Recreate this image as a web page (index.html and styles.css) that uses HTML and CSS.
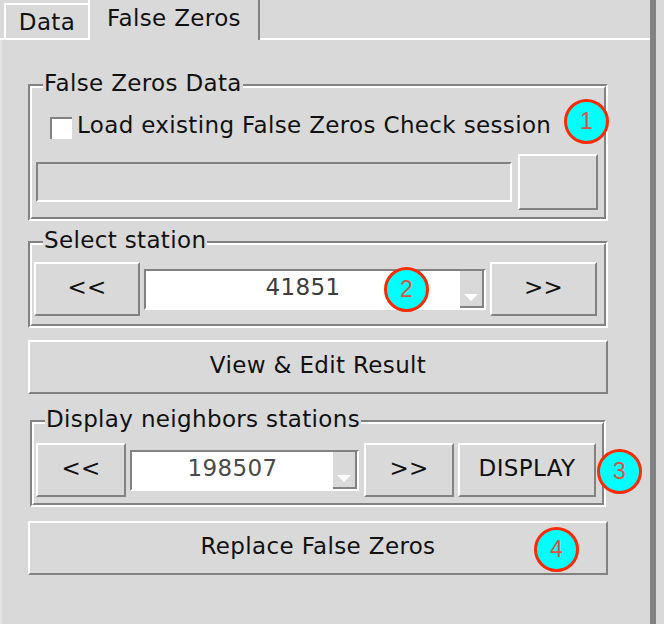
FILE: index.html
```html
<!DOCTYPE html>
<html>
<head>
<meta charset="utf-8">
<link rel="stylesheet" href="styles.css">
</head>
<body>
<div class="window">
  <div class="notebook">
    <div class="tabbar">
      <div class="tab-lead"></div>
      <div class="tab">Data</div>
      <div class="tab tab-active">False Zeros</div>
      <div class="tab-fill"></div>
    </div>
    <div class="pane">
      <div class="group g1">
        <div class="group-inner g1-inner">
          <span class="legend">False Zeros Data</span>
          <div class="check-row">
            <span class="checkbox"></span>
            <span class="check-label">Load existing False Zeros Check session</span>
          </div>
          <div class="file-row">
            <div class="entry"></div>
            <div class="btn browse"></div>
          </div>
        </div>
      </div>

      <div class="group g2">
        <div class="group-inner g2-inner">
          <span class="legend">Select station</span>
          <div class="nav-row">
            <div class="btn nav-btn-a">&lt;&lt;</div>
            <div class="combo combo-a">
              <div class="combo-value">41851</div>
              <div class="combo-arrow"><span class="tri"></span></div>
            </div>
            <div class="btn nav-btn-b">&gt;&gt;</div>
          </div>
        </div>
      </div>

      <div class="btn wide-btn view-btn">View &amp; Edit Result</div>

      <div class="group g3">
        <div class="group-inner g3-inner">
          <span class="legend">Display neighbors stations</span>
          <div class="nav-row nav-row-3">
            <div class="btn small-nav">&lt;&lt;</div>
            <div class="combo combo-b">
              <div class="combo-value light">198507</div>
              <div class="combo-arrow"><span class="tri"></span></div>
            </div>
            <div class="btn small-nav">&gt;&gt;</div>
            <div class="btn display-btn">DISPLAY</div>
          </div>
        </div>
      </div>

      <div class="btn wide-btn replace-btn">Replace False Zeros</div>
    </div>
  </div>
  <div class="sash"></div>
  <div class="rest"></div>

  <div class="badge b1">1</div>
  <div class="badge b2">2</div>
  <div class="badge b3">3</div>
  <div class="badge b4">4</div>
</div>
</body>
</html>
```

FILE: styles.css
```css
html, body {
  margin: 0;
  padding: 0;
  background: #d9d9d9;
}

.window {
  position: relative;
  width: 664px;
  height: 624px;
  display: flex;
  overflow: hidden;
  background: #d9d9d9;
  font-family: "DejaVu Sans", sans-serif;
  font-size: 23px;
  letter-spacing: 0.35px;
  color: #111;
}

.notebook {
  width: 650px;
  display: flex;
  flex-direction: column;
}

.sash {
  width: 6px;
  background: #828282;
}

.rest {
  width: 8px;
}

/* Tabs */
.tabbar {
  display: flex;
  align-items: flex-end;
  height: 40px;
}

.tab-lead {
  width: 4px;
  height: 0;
  border-bottom: 2px solid #fff;
}

.tab {
  box-sizing: border-box;
  width: 84px;
  height: 37px;
  border-top: 2px solid #fff;
  border-left: 2px solid #fff;
  border-bottom: 2px solid #fff;
  padding-top: 4px;
  line-height: 27px;
  text-align: center;
  white-space: nowrap;
}

.tab-active {
  width: 172px;
  height: 40px;
  border-top: none;
  border-bottom: none;
  border-left: 2px solid #fff;
  border-right: 2px solid #828282;
  padding-top: 5px;
}

.tab-fill {
  flex: 1;
  height: 0;
  border-bottom: 2px solid #fff;
}

/* Pane */
.pane {
  flex: 1;
  border-left: 2px solid #e4e4e4;
  padding: 44px 0 0 26px;
  display: flex;
  flex-direction: column;
  align-items: flex-start;
}

/* Group (groove label frame) */
.group {
  position: relative;
  box-sizing: border-box;
  width: 580px;
  border: 2px solid;
  border-color: #828282 #fff #fff #828282;
}

.group-inner {
  border: 2px solid;
  border-color: #fff #828282 #828282 #fff;
}

.legend {
  position: absolute;
  top: -16px;
  left: 13px;
  padding: 0 1px;
  line-height: 27px;
  background: #d9d9d9;
  white-space: nowrap;
}

.g1 { height: 137px; }
.g1-inner {
  height: 133px;
  box-sizing: border-box;
  padding: 22px 0 7px 0;
}

.check-row {
  height: 34px;
  display: flex;
  align-items: center;
  padding-left: 18px;
}

.checkbox {
  box-sizing: border-box;
  width: 22px;
  height: 22px;
  background: #fff;
  border-top: 2px solid #828282;
  border-left: 2px solid #828282;
  margin-right: 5px;
  margin-top: 1px;
}

.check-label {
  line-height: 27px;
  white-space: nowrap;
  margin-top: -3px;
}

.file-row {
  margin-top: 10px;
  height: 56px;
  display: flex;
  align-items: center;
  padding-left: 4px;
}

.entry {
  box-sizing: border-box;
  width: 476px;
  height: 40px;
  border: 2px solid;
  border-color: #828282 #fff #fff #828282;
  margin-right: 6px;
}

/* Buttons */
.btn {
  box-sizing: border-box;
  border: 2px solid;
  border-color: #fff #828282 #828282 #fff;
  display: flex;
  align-items: center;
  justify-content: center;
  white-space: nowrap;
  line-height: 27px;
  padding-bottom: 4px;
}

.browse {
  width: 80px;
  height: 56px;
}

.g2 {
  margin-top: 20px;
  height: 87px;
}
.g2-inner {
  height: 83px;
  box-sizing: border-box;
  padding: 17px 0 8px 2px;
}

.nav-row {
  display: flex;
  align-items: center;
  gap: 4px;
  height: 54px;
}

.nav-btn-a { width: 106px; height: 54px; }
.nav-btn-b { width: 107px; height: 54px; }

/* Combobox */
.combo {
  box-sizing: border-box;
  height: 41px;
  border: 2px solid;
  border-color: #828282 #fff #fff #828282;
  display: flex;
}

.combo-a { width: 342px; }
.combo-b { width: 229px; }

.combo-value {
  flex: 1;
  background: #fff;
  color: #3c3c3c;
  display: flex;
  align-items: center;
  justify-content: center;
  line-height: 27px;
  padding-bottom: 3px;
}

.combo-value.light {
  color: #4a4a4a;
}

.combo-arrow {
  box-sizing: border-box;
  width: 24px;
  background: #d9d9d9;
  border-right: 2px solid #828282;
  border-bottom: 2px solid #828282;
  display: flex;
  justify-content: center;
  align-items: flex-end;
  padding-bottom: 5px;
}

.tri {
  width: 0;
  height: 0;
  border-left: 7px solid transparent;
  border-right: 7px solid transparent;
  border-top: 7px solid #fff;
}

.wide-btn {
  width: 580px;
  height: 54px;
}

.view-btn { margin-top: 12px; }

.g3 {
  margin-top: 26px;
  margin-left: 2px;
  width: 576px;
  height: 87px;
}
.g3-inner {
  height: 83px;
  box-sizing: border-box;
  padding: 19px 0 6px 2px;
}

.nav-row-3 .combo-b { margin-right: 1px; }

.small-nav { width: 90px; height: 54px; }
.display-btn { width: 138px; height: 54px; }

.replace-btn { margin-top: 14px; }

/* Annotation badges */
.badge {
  position: absolute;
  box-sizing: border-box;
  width: 45px;
  height: 45px;
  border-radius: 50%;
  background: #00ffff;
  border: 3px solid #ff2a00;
  color: #e0503c;
  font-family: "Liberation Sans", sans-serif;
  font-size: 23px;
  letter-spacing: 0;
  display: flex;
  align-items: center;
  justify-content: center;
}

.b1 { left: 564px; top: 99px; }
.b2 { left: 384px; top: 267px; }
.b3 { left: 597px; top: 449px; }
.b4 { left: 534px; top: 527px; }
```
